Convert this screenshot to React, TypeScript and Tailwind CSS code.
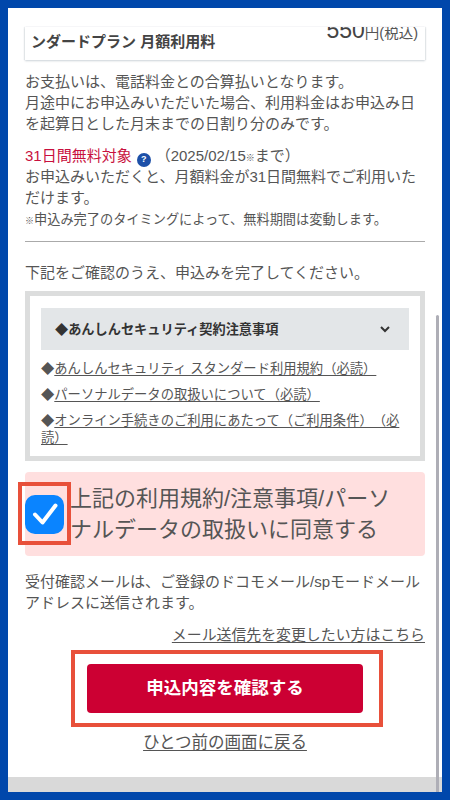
const FONT = "font-['Liberation_Sans','Noto_Sans_CJK_JP',sans-serif]";

const LINKS = [
  "あんしんセキュリティ スタンダード利用規約（必読）",
  "パーソナルデータの取扱いについて（必読）",
  "オンライン手続きのご利用にあたって（ご利用条件）（必読）",
];

function LegalBox() {
  return (
    <div className="mt-[8px] h-[170px] border-[5px] border-[#dcdddd] px-[11px] pt-[12px]">
      <div className="flex h-[42px] items-center justify-between bg-[#e3e6e8] pl-[14px] pr-[19px]">
        <span className="text-[13.2px] font-bold text-[#333]">◆あんしんセキュリティ契約注意事項</span>
        <svg width="10" height="7" viewBox="0 0 10 7" fill="none" stroke="#333" strokeWidth="2">
          <path d="M1 1l4 4 4-4" />
        </svg>
      </div>
      <ul className="mt-[10px] text-[13.3px] leading-[17px] text-[#555] [text-spacing-trim:space-all]">
        {LINKS.map((link, i) => (
          <li key={link} className={i > 0 ? "mt-[9px]" : ""}>
            ◆<span className="underline underline-offset-2">{link}</span>
          </li>
        ))}
      </ul>
    </div>
  );
}

export default function App() {
  return (
    <div className={`${FONT} h-[800px] w-[450px] overflow-hidden bg-[#0047ab] p-[8px]`}>
      <div className="relative flex h-[784px] flex-col bg-white">
        <div className="flex-1 overflow-hidden px-[17px] pt-[19px] text-[15px] leading-[21px] text-[#555]">
          <div className="flex h-[33px] justify-between overflow-hidden pl-[6px] pr-[7px] shadow-[0_1px_2px_rgba(120,140,150,0.35),1px_0_1px_rgba(120,140,150,0.12),-1px_0_1px_rgba(120,140,150,0.12)]">
            <span className="mt-[4px] text-[15px] font-bold text-[#444]">ンダードプラン 月額利用料</span>
            <span className="-mt-[7px] text-[14.5px]">
              <span className="text-[23px] text-[#444]">550</span>円(税込)
            </span>
          </div>

          <p className="mt-[11px]">
            お支払いは、電話料金との合算払いとなります。
            <br />
            月途中にお申込みいただいた場合、利用料金はお申込み日を起算日とした月末までの日割り分のみです。
          </p>

          <p className="mt-[11px] h-[21px]">
            <span className="text-[#c8103e]">31日間無料対象</span>
            <span className="ml-[5px] mr-[5px] inline-flex h-[14px] w-[14px] items-center justify-center rounded-full bg-[#1d50a8] align-[-1px] text-[9px] font-bold leading-none text-white">
              ?
            </span>
            （2025/02/15<span className="text-[9px]">※</span>まで）
          </p>
          <p>お申込みいただくと、月額料金が31日間無料でご利用いただけます。</p>
          <p className="pt-[1px] text-[13.2px]">
            <span className="text-[9px]">※</span>申込み完了のタイミングによって、無料期間は変動します。
          </p>

          <hr className="mt-[9px] border-t border-[#aaa]" />

          <p className="mt-[20px]">下記をご確認のうえ、申込みを完了してください。</p>

          <LegalBox />

          <div className="relative mt-[11px] flex h-[84px] items-center gap-[6px] rounded-[4px] bg-[#ffdfdf] pr-[30px]">
            <span className="flex h-[39px] w-[39px] shrink-0 items-center justify-center rounded-[10px] bg-[#0a84ff]">
              <svg width="26" height="22" viewBox="0 0 26 22" fill="none" stroke="white" strokeWidth="4" strokeLinecap="round" strokeLinejoin="round">
                <path d="M3 11.5l7.5 8L23.5 2.5" />
              </svg>
            </span>
            <span className="text-[22px] leading-[31px] text-[#555]">
              上記の利用規約/注意事項/パーソナルデータの取扱いに同意する
            </span>
            <span className="absolute -left-[7px] top-[10px] h-[63px] w-[53px] border-[4px] border-[#e8503a]" />
          </div>

          <p className="mt-[15px]">受付確認メールは、ご登録のドコモメール/spモードメールアドレスに送信されます。</p>

          <div className="mt-[11px] text-right">
            <a className="text-[14.9px] underline underline-offset-2">メール送信先を変更したい方はこちら</a>
          </div>

          <div className="relative mt-[18px] flex justify-center">
            <button type="button" className="h-[49px] w-[276px] rounded-[4px] bg-[#cc0033] text-[17.5px] font-bold text-white">
              申込内容を確認する
            </button>
            <span className="absolute left-[46px] -top-[14px] h-[77px] w-[312px] border-[4px] border-[#e8503a]" />
          </div>

          <div className="mt-[19px] text-center">
            <a className="text-[16.5px] underline underline-offset-2">ひとつ前の画面に戻る</a>
          </div>
        </div>

        <div className="h-[15px] bg-[#d9d9d9]" />
        <span className="absolute right-[3px] bottom-0 top-[307px] w-[3px] rounded-t-full bg-[#aeaeb6]" />
      </div>
    </div>
  );
}
